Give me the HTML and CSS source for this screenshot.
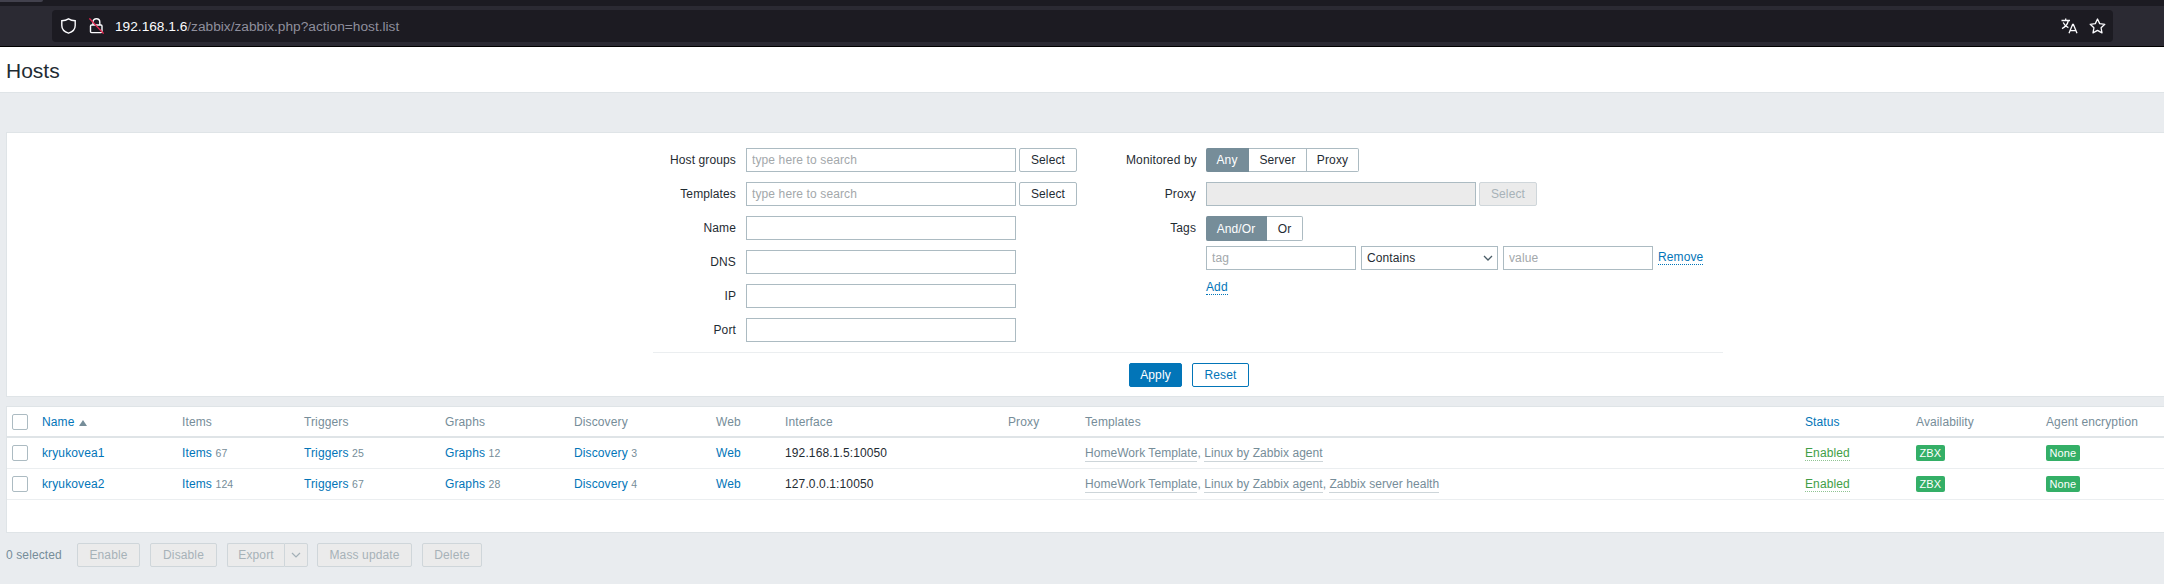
FILE: index.html
```html
<!DOCTYPE html>
<html lang="en">
<head>
<meta charset="utf-8">
<title>Hosts</title>
<link rel="stylesheet" href="styles.css">
</head>
<body>
<div class="browser">
  <div class="tabstrip"><div class="tab"></div></div>
  <div class="toolbar">
    <div class="urlbar">
      <svg class="ico shield" width="15" height="16" viewBox="0 0 15 16"><path d="M7.5 0.8 C5.5 2 3 2.6 0.8 2.7 V7.5 C0.8 11.2 3.6 14 7.5 15.2 C11.4 14 14.2 11.2 14.2 7.5 V2.7 C12 2.6 9.5 2 7.5 0.8 Z" fill="none" stroke="#fbfbfe" stroke-width="1.4"/></svg>
      <svg class="ico lock" width="15" height="16" viewBox="0 0 15 16"><path d="M4 7 V4 C4 2 5.6 0.8 7.4 0.8 C9.2 0.8 10.8 2 10.8 4 V7" fill="none" stroke="#fbfbfe" stroke-width="1.4"/><rect x="1.5" y="7" width="11.5" height="7.6" rx="1" fill="none" stroke="#fbfbfe" stroke-width="1.4"/><path d="M0.4 0.4 L14.6 15.6" stroke="#e22850" stroke-width="1.3"/></svg>
      <span class="url"><span class="host">192.168.1.6</span>/zabbix/zabbix.php?action=host.list</span>
      <svg class="ico translate" width="17" height="16" viewBox="0 0 17 16"><path d="M0.5 2.5 H9 M4.7 0.5 V2.5 M7.4 2.5 C6.6 6 4 9.2 1 10.6 M2.2 4.4 C3.4 7 5.4 8.8 7.4 9.6 M8 15.2 L11.6 6.4 H12.4 L16 15.2 M9.2 12.6 H14.8" fill="none" stroke="#fbfbfe" stroke-width="1.3"/></svg>
      <svg class="ico star" width="17" height="16" viewBox="0 0 17 16"><path d="M8.5 1 L10.7 5.6 L15.8 6.3 L12.1 9.8 L13 14.9 L8.5 12.4 L4 14.9 L4.9 9.8 L1.2 6.3 L6.3 5.6 Z" fill="none" stroke="#fbfbfe" stroke-width="1.3" stroke-linejoin="round"/></svg>
    </div>
  </div>
</div>

<header class="page-title"><h1>Hosts</h1></header>

<main class="content">
  <section class="panel filter">
    <form class="filter-form">
      <div class="filter-cols">
        <div class="col-left">
          <div class="row">
            <label class="lbl">Host groups</label>
            <input class="field wide" placeholder="type here to search">
            <button type="button" class="btn">Select</button>
          </div>
          <div class="row">
            <label class="lbl">Templates</label>
            <input class="field wide" placeholder="type here to search">
            <button type="button" class="btn">Select</button>
          </div>
          <div class="row"><label class="lbl">Name</label><input class="field wide"></div>
          <div class="row"><label class="lbl">DNS</label><input class="field wide"></div>
          <div class="row"><label class="lbl">IP</label><input class="field wide"></div>
          <div class="row"><label class="lbl">Port</label><input class="field wide"></div>
        </div>
        <div class="col-right">
          <div class="row">
            <label class="lbl lbl-r">Monitored by</label>
            <div class="seg"><span class="seg-item on w-any">Any</span><span class="seg-item w-server">Server</span><span class="seg-item w-proxy">Proxy</span></div>
          </div>
          <div class="row">
            <label class="lbl lbl-r">Proxy</label>
            <input class="field wide off" disabled>
            <button type="button" class="btn off" disabled>Select</button>
          </div>
          <div class="row row-tags">
            <label class="lbl lbl-r">Tags</label>
            <div class="tags">
              <div class="seg seg-tall"><span class="seg-item on w-andor">And/Or</span><span class="seg-item w-or">Or</span></div>
              <div class="tag-row">
                <input class="field tag" placeholder="tag">
                <div class="select">Contains<svg class="chev" width="10" height="6" viewBox="0 0 10 6"><path d="M1 1 L5 5 L9 1" fill="none" stroke="#4a5c66" stroke-width="1.3"/></svg></div>
                <input class="field tag" placeholder="value">
                <a class="link dotted remove">Remove</a>
              </div>
              <a class="link dotted add">Add</a>
            </div>
          </div>
        </div>
      </div>
      <div class="filter-actions">
        <button type="button" class="btn primary">Apply</button>
        <button type="button" class="btn outline">Reset</button>
      </div>
    </form>
  </section>

  <section class="panel list">
    <table class="hosts">
      <colgroup>
        <col class="c-chk"><col class="c-name"><col class="c-items"><col class="c-trig"><col class="c-graph"><col class="c-disc"><col class="c-web"><col class="c-if"><col class="c-proxy"><col class="c-tpl"><col class="c-status"><col class="c-avail"><col class="c-enc">
      </colgroup>
      <thead>
        <tr>
          <th class="chk"><span class="box"></span></th>
          <th><a class="link">Name</a><span class="sort"></span></th>
          <th>Items</th><th>Triggers</th><th>Graphs</th><th>Discovery</th><th>Web</th><th>Interface</th><th>Proxy</th><th>Templates</th>
          <th><a class="link">Status</a></th>
          <th>Availability</th><th>Agent encryption</th>
        </tr>
      </thead>
      <tbody>
        <tr>
          <td class="chk"><span class="box"></span></td>
          <td><a class="link">kryukovea1</a></td>
          <td><a class="link">Items</a> <sup class="n">67</sup></td>
          <td><a class="link">Triggers</a> <sup class="n">25</sup></td>
          <td><a class="link">Graphs</a> <sup class="n">12</sup></td>
          <td><a class="link">Discovery</a> <sup class="n">3</sup></td>
          <td><a class="link">Web</a></td>
          <td>192.168.1.5:10050</td>
          <td></td>
          <td class="tpl"><a>HomeWork Template</a>, <a>Linux by Zabbix agent</a></td>
          <td><a class="enabled">Enabled</a></td>
          <td><span class="badge">ZBX</span></td>
          <td><span class="badge">None</span></td>
        </tr>
        <tr>
          <td class="chk"><span class="box"></span></td>
          <td><a class="link">kryukovea2</a></td>
          <td><a class="link">Items</a> <sup class="n">124</sup></td>
          <td><a class="link">Triggers</a> <sup class="n">67</sup></td>
          <td><a class="link">Graphs</a> <sup class="n">28</sup></td>
          <td><a class="link">Discovery</a> <sup class="n">4</sup></td>
          <td><a class="link">Web</a></td>
          <td>127.0.0.1:10050</td>
          <td></td>
          <td class="tpl"><a>HomeWork Template</a>, <a>Linux by Zabbix agent</a>, <a>Zabbix server health</a></td>
          <td><a class="enabled">Enabled</a></td>
          <td><span class="badge">ZBX</span></td>
          <td><span class="badge">None</span></td>
        </tr>
      </tbody>
    </table>
  </section>

  <div class="actions">
    <span class="selected">0 selected</span>
    <button type="button" class="btn off a-enable">Enable</button>
    <button type="button" class="btn off a-disable">Disable</button>
    <div class="split"><button type="button" class="btn off export">Export</button><button type="button" class="btn off caret"><svg width="10" height="6" viewBox="0 0 10 6"><path d="M1 1 L5 5 L9 1" fill="none" stroke="#a3b0b7" stroke-width="1.2"/></svg></button></div>
    <button type="button" class="btn off a-mass">Mass update</button>
    <button type="button" class="btn off a-delete">Delete</button>
  </div>
</main>
</body>
</html>
```

FILE: styles.css
```css
* { box-sizing: border-box; }
html, body { margin: 0; height: 100%; overflow: hidden; }
body { background: #e9ecef; font: 12px "Liberation Sans", Arial, sans-serif; letter-spacing: .12px; color: #1f2c33; }

.browser { background: #2b2a33; border-bottom: 1px solid #000; height: 47px; }
.tabstrip { height: 6px; background: #1c1b22; }
.tab { width: 43px; height: 2px; background: #42414d; border-radius: 0 0 3px 0; }
.toolbar { height: 40px; padding: 4px 51px 4px 52px; }
.urlbar { height: 32px; background: #1c1b22; border-radius: 4px; display: flex; align-items: center; padding: 0 7px 0 9px; color: #fbfbfe; }
.ico { flex: none; display: block; }
.lock { margin-left: 13px; }
.url { margin-left: 11px; font: 13.7px "Liberation Sans", Arial, sans-serif; letter-spacing: 0; color: #8f8f9d; flex: 1; }
.host { color: #fbfbfe; }
.translate { margin-right: 11px; }

.page-title { height: 46px; background: #fff; border-bottom: 1px solid #dfe4e7; padding: 12px 0 0 6px; }
.page-title h1 { margin: 0; font-weight: 400; font-size: 21px; line-height: 24px; letter-spacing: 0; color: #1f2c33; }

.content { padding: 39px 0 0 6px; }
.panel { background: #fff; border: 1px solid #dfe4e7; border-right: 0; }
.filter { height: 265px; padding: 15px 0 0 646px; }
.filter-form { width: 1070px; }
.filter-cols { display: flex; height: 205px; border-bottom: 1px solid #ebeef0; }
.col-left { width: 473px; }
.row { display: flex; align-items: flex-start; height: 24px; margin-bottom: 10px; }
.lbl { width: 93px; padding-right: 10px; text-align: right; line-height: 24px; white-space: nowrap; }
.col-right .lbl-r { width: 80px; }
.field { height: 24px; border: 1px solid #acbbc2; background: #fff; padding: 0 5px; font: inherit; letter-spacing: inherit; color: #1f2c33; outline: 0; border-radius: 0; }
.field::placeholder { color: #a3a8ab; opacity: 1; }
.wide { width: 270px; }
.field.off { background: #ebebeb; }
.btn { height: 24px; border: 1px solid #acbbc2; border-radius: 2px; background: #fff; padding: 0; font: inherit; letter-spacing: inherit; color: #1f2c33; margin: 0; }
.field + .btn { margin-left: 3px; width: 58px; }
.btn.off { background: #ebebeb; border-color: #cfd6da; color: #a7b2b8; }

.seg { display: flex; height: 24px; }
.seg-tall { height: 25px; }
.seg-item { display: flex; align-items: center; justify-content: center; border: 1px solid #acbbc2; border-left: 0; background: #fff; }
.seg-item:first-child { border-radius: 2px 0 0 2px; }
.seg-item:last-child { border-radius: 0 2px 2px 0; }
.seg-item.on { background: #768d99; border-color: #768d99; color: #fff; }
.w-any { width: 43px; }
.w-server { width: 58px; }
.w-proxy { width: 52px; }
.w-andor { width: 61px; }
.w-or { width: 36px; }

.row-tags { height: auto; margin: 0; }
.tags { display: flex; flex-direction: column; align-items: flex-start; }
.tag-row { display: flex; align-items: center; gap: 5px; margin-top: 5px; }
.tag { width: 150px; }
.select { width: 137px; height: 24px; border: 1px solid #acbbc2; display: flex; align-items: center; justify-content: space-between; padding: 0 4px 0 5px; background: #fff; }
.chev { display: block; }
.link { color: #0275b8; }
.dotted { border-bottom: 1px dotted #0275b8; }
.remove { line-height: 13px; }
.add { margin-top: 11px; line-height: 13px; }

.filter-actions { display: flex; justify-content: center; gap: 10px; padding: 10px 0 0 2px; }
.primary { width: 53px; background: #0275b8; border-color: #0275b8; color: #fff; }
.outline { width: 57px; border-color: #0275b8; color: #0275b8; }

.list { margin-top: 9px; height: 127px; }
.hosts { border-collapse: separate; border-spacing: 0; table-layout: fixed; width: 2157px; }
.c-chk { width: 35px; } .c-name { width: 140px; } .c-items { width: 122px; } .c-trig { width: 141px; }
.c-graph { width: 129px; } .c-disc { width: 142px; } .c-web { width: 69px; } .c-if { width: 223px; }
.c-proxy { width: 77px; } .c-tpl { width: 720px; } .c-status { width: 111px; } .c-avail { width: 130px; } .c-enc { width: 118px; }
.hosts th { height: 31px; padding: 0; text-align: left; font-weight: 400; color: #768d99; border-bottom: 2px solid #dfe4e7; white-space: nowrap; }
.hosts td { height: 31px; padding: 0; border-bottom: 1px solid #ebeef0; white-space: nowrap; }
.hosts .chk { padding-left: 5px; }
.box { display: block; width: 16px; height: 16px; border: 1px solid #acbbc2; border-radius: 2px; background: #fff; }
.sort { display: inline-block; margin-left: 4px; width: 0; height: 0; border: 4px solid transparent; border-top: 0; border-bottom: 6px solid #768d99; }
.n { font-size: 10.5px; color: #768d99; vertical-align: baseline; line-height: 1; }
.tpl { color: #768d99; letter-spacing: .05px; }
.tpl a { border-bottom: 1px solid #cdd5d9; padding-bottom: 1px; }
.enabled { color: #429e47; border-bottom: 1px dotted #8fc493; }
.badge { display: inline-block; background: #34af67; color: #fff; border-radius: 2px; height: 16px; line-height: 16px; padding: 0 3.5px; font-size: 11px; vertical-align: middle; }

.actions { display: flex; align-items: center; gap: 10px; margin-top: 10px; height: 24px; color: #768d99; }
.selected { width: 61px; white-space: nowrap; }
.split { display: flex; margin-right: -1px; }
.export { border-radius: 2px 0 0 2px; border-right: 0; width: 57px; }
.caret { border-radius: 0 2px 2px 0; width: 24px; display: flex; align-items: center; justify-content: center; }
.a-enable { width: 63px; }
.a-disable { width: 67px; }
.a-mass { width: 95px; }
.a-delete { width: 60px; }
```
